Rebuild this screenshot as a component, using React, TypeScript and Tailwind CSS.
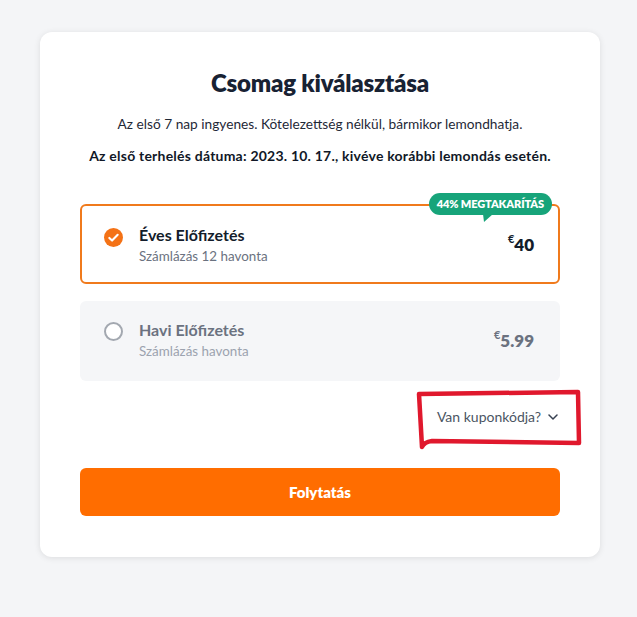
import React from "react";

function Check() {
  return (
    <svg width="19" height="19" viewBox="0 0 20 20">
      <circle cx="10" cy="10" r="10" fill="#f47216" />
      <path d="M5.6 10.4l2.9 2.8 5.9-6" fill="none" stroke="#fff" strokeWidth="2.2" strokeLinecap="round" strokeLinejoin="round" />
    </svg>
  );
}

function Radio() {
  return <div className="w-[19px] h-[19px] rounded-full border-2 border-[#a3a8b0] bg-white" />;
}

export default function App() {
  return (
    <div className="min-h-[617px] bg-[#f4f5f7] pt-[32px] relative" style={{ fontFamily: "Lato, 'Noto Sans', sans-serif" }}>
      <div className="ml-[40px] w-[560px] bg-white rounded-[12px] shadow-[0_1px_6px_rgba(0,0,0,0.10)] px-[40px] pt-[35px] pb-[41px]">
        <h1 className="text-center text-[24px] leading-[32px] font-extrabold text-[#182233] tracking-[-0.2px]">
          Csomag kiválasztása
        </h1>
        <p className="mt-[15px] text-center text-[13.7px] leading-[20px] text-[#1f2937]">
          Az első 7 nap ingyenes. Kötelezettség nélkül, bármikor lemondhatja.
        </p>
        <p className="mt-[12px] text-center text-[14px] leading-[20px] font-bold text-[#111827] tracking-[0.22px]">
          Az első terhelés dátuma: 2023. 10. 17., kivéve korábbi lemondás esetén.
        </p>

        <div className="mt-[38px] relative h-[80px] rounded-[6px] border-2 border-[#f07a1c] flex items-start pt-[19px] pl-[22px] pr-[24px]">
          <div className="absolute right-[6px] top-[-13px] flex flex-col items-center">
            <div className="bg-[#17a47a] text-white text-[11px] leading-[22px] font-extrabold rounded-full px-[8px] tracking-[-0.1px]">
              44% MEGTAKARÍTÁS
            </div>
            <svg width="10" height="8" viewBox="0 0 10 8" className="self-start ml-[54px] -mt-[1px]">
              <path d="M0 0h10L1 8z" fill="#17a47a" />
            </svg>
          </div>
          <div className="mt-[3px]">
            <Check />
          </div>
          <div className="ml-[16px] flex-1">
            <div className="text-[16px] leading-[20px] font-bold text-[#131c2b]">Éves Előfizetés</div>
            <div className="mt-[2px] text-[13.4px] leading-[18px] text-[#6b7280]">Számlázás 12 havonta</div>
          </div>
          <div className="flex items-start text-[#131c2b] mt-[10px]">
            <span className="text-[11px] leading-[12px] font-bold mt-[-2px]">€</span>
            <span className="text-[17px] leading-[20px] font-extrabold">40</span>
          </div>
        </div>

        <div className="mt-[17px] h-[80px] rounded-[6px] bg-[#f5f6f8] flex items-start pt-[19px] pl-[24px] pr-[26px]">
          <div className="mt-[2px]">
            <Radio />
          </div>
          <div className="ml-[16px] flex-1">
            <div className="text-[16px] leading-[20px] font-bold text-[#6b7280]">Havi Előfizetés</div>
            <div className="mt-[2px] text-[13.4px] leading-[18px] text-[#9ca3af]">Számlázás havonta</div>
          </div>
          <div className="flex items-start text-[#6b7280] mt-[11px]">
            <span className="text-[11px] leading-[12px] font-bold mt-[-2px]">€</span>
            <span className="text-[17px] leading-[20px] font-extrabold">5.99</span>
          </div>
        </div>

        <div className="mt-[26px] flex justify-end">
          <button className="flex items-center gap-[7px] text-[14px] leading-[20px] text-[#4b5563] pr-[2px]">
            Van kuponkódja?
            <svg width="10" height="6" viewBox="0 0 10 6">
              <path d="M1 1l4 4 4-4" fill="none" stroke="#374151" strokeWidth="1.5" strokeLinecap="round" strokeLinejoin="round" />
            </svg>
          </button>
        </div>

        <button className="mt-[41px] w-full h-[48px] rounded-[6px] bg-[#ff6d00] text-white text-[15px] font-extrabold">
          Folytatás
        </button>
      </div>

      <svg className="absolute left-0 top-0 pointer-events-none" width="637" height="617" viewBox="0 0 637 617">
        <path
          d="M419 394 L578 392 L579 443 L432 441 Q424 442 422 447 L419 394"
          fill="none"
          stroke="#e0182d"
          strokeWidth="4.5"
          strokeLinejoin="round"
          strokeLinecap="round"
        />
      </svg>
    </div>
  );
}
